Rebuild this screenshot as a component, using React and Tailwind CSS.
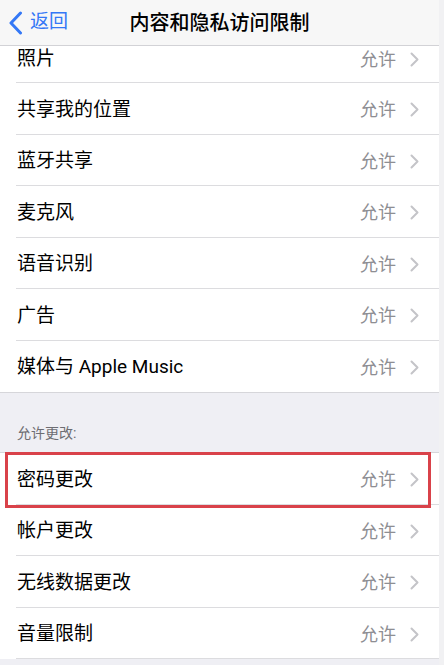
import React from "react";

const font = { fontFamily: '"Roboto", "Noto Sans CJK SC", sans-serif' };

function Chevron() {
  return (
    <svg width="9" height="15" viewBox="0 0 9 15" className="shrink-0">
      <polyline points="1.5,1.5 7.5,7.5 1.5,13.5" fill="none" stroke="#c4c4c8" strokeWidth="2" strokeLinecap="round" strokeLinejoin="round" />
    </svg>
  );
}

function SepRow({ label, last, first, height = "h-[51.5px]" }) {
  return (
    <div className={`relative bg-white ${height}`}>
      <div className={`flex h-full items-center pl-[17px] pr-[20px] pt-[2px] ${first ? "pb-[12px]" : ""}`}>
        <span className="flex-1 text-[19px] text-black">{label}</span>
        <span className="text-[18px] text-[#8e8e93] mr-[14px]">允许</span>
        <Chevron />
      </div>
      {!last && <div className="absolute bottom-0 left-[16px] right-0 h-px bg-[#dcdcdf]" />}
    </div>
  );
}

export default function App() {
  const group1 = ["共享我的位置", "蓝牙共享", "麦克风", "语音识别", "广告", "媒体与 Apple Music"];
  const group2 = ["帐户更改", "无线数据更改", "音量限制"];
  return (
    <div className="w-[444px] h-[665px] overflow-hidden bg-[#f1f1f3] flex" style={font}>
      <div className="w-[439px] flex flex-col bg-[#efeff4]">
        <div className="relative h-[46px] shrink-0 bg-[#f7f7f7] border-b border-[#d2d2d6] flex items-center">
          <div className="flex items-center pl-[8px] gap-[7px]">
            <svg width="15" height="24" viewBox="0 0 15 24">
              <polyline points="12.5,2 3,12 12.5,22" fill="none" stroke="#3478f6" strokeWidth="3" strokeLinecap="round" strokeLinejoin="round" />
            </svg>
            <span className="text-[19px] text-[#3478f6]">返回</span>
          </div>
          <div className="absolute inset-0 flex items-center justify-center pointer-events-none">
            <span className="text-[20px] font-medium text-black">内容和隐私访问限制</span>
          </div>
        </div>
        <div className="bg-white border-b border-[#d6d6da]">
          <SepRow label="照片" first height="h-[37px]" />
          {group1.map((l, i) => (
            <SepRow key={l} label={l} last={i === group1.length - 1} />
          ))}
        </div>
        <div className="h-[59px] shrink-0 flex items-end pl-[17px] pb-[8px]">
          <span className="text-[14px] text-[#6d6d72]">允许更改:</span>
        </div>
        <div className="bg-white border-t border-[#d6d6da]">
          <div className="relative z-10">
            <SepRow label="密码更改" />
            <div className="absolute left-[5px] w-[426px] top-[-1px] h-[56px] border-[3px] border-[#d9424a] pointer-events-none" />
          </div>
          {group2.map((l) => (
            <SepRow key={l} label={l} />
          ))}
        </div>
      </div>
    </div>
  );
}
